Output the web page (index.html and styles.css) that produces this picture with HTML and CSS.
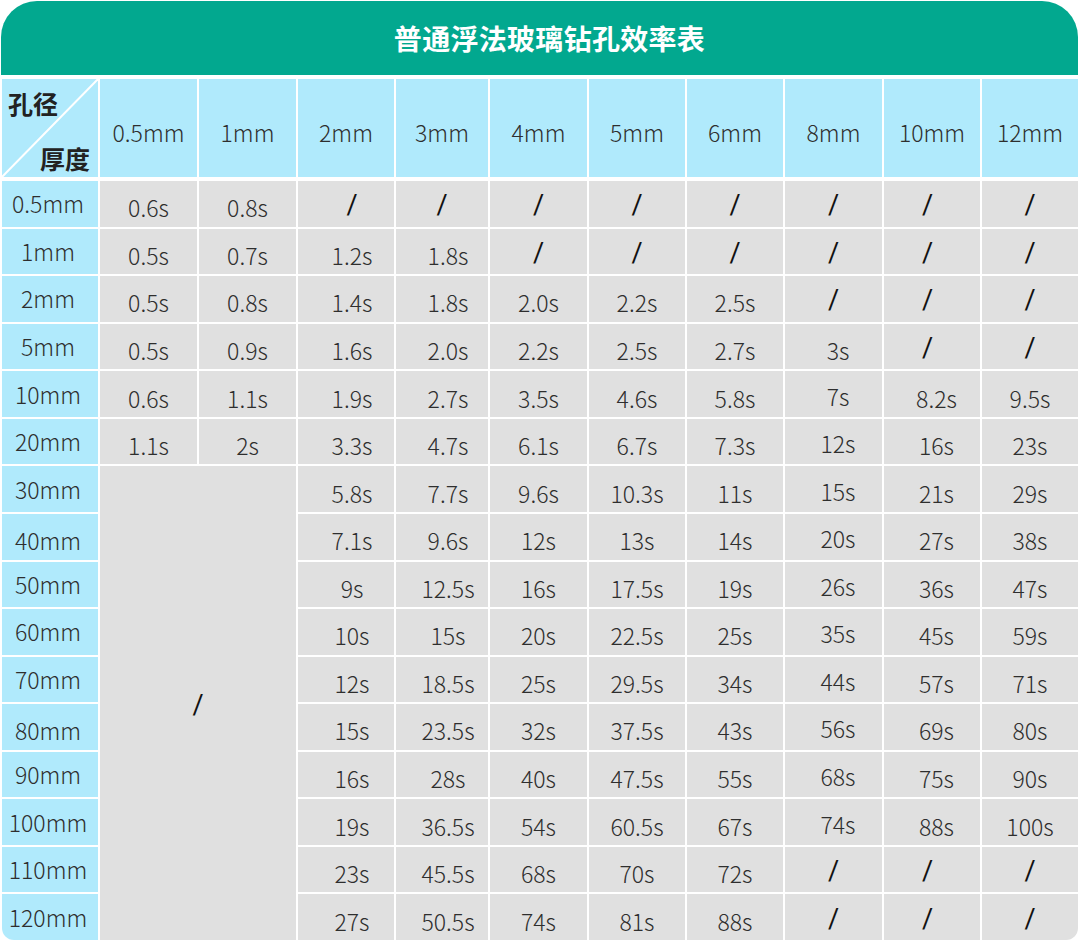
FILE: index.html
```html
<!DOCTYPE html>
<html lang="zh-CN">
<head>
<meta charset="utf-8">
<title>普通浮法玻璃钻孔效率表</title>
<link rel="stylesheet" href="styles.css">
</head>
<body>
<div class="sheet">
  <div class="title">普通浮法玻璃钻孔效率表</div>
  <div class="grid head">
    <div class="cell corner">
      <svg class="diag" width="96" height="98" viewBox="0 0 96 98"><line x1="0" y1="98" x2="96" y2="0" stroke="#ffffff" stroke-width="2"/></svg>
      <span class="lbl-top">孔径</span>
      <span class="lbl-bot">厚度</span>
    </div>
    <div class="cell hd">0.5mm</div><div class="cell hd">1mm</div><div class="cell hd">2mm</div><div class="cell hd">3mm</div><div class="cell hd">4mm</div><div class="cell hd">5mm</div><div class="cell hd">6mm</div><div class="cell hd">8mm</div><div class="cell hd">10mm</div><div class="cell hd">12mm</div>
  </div>
  <div class="grid body">
    <div class="cell v na merged">/</div>

    <div class="cell rl">0.5mm</div><div class="cell v">0.6s</div><div class="cell v">0.8s</div><div class="cell v na s6">/</div><div class="cell v na">/</div><div class="cell v na">/</div><div class="cell v na">/</div><div class="cell v na">/</div><div class="cell v na">/</div><div class="cell v na m4">/</div><div class="cell v na">/</div>
    <div class="cell rl">1mm</div><div class="cell v">0.5s</div><div class="cell v">0.7s</div><div class="cell v s6">1.2s</div><div class="cell v s6">1.8s</div><div class="cell v na">/</div><div class="cell v na">/</div><div class="cell v na">/</div><div class="cell v na">/</div><div class="cell v na m4">/</div><div class="cell v na">/</div>
    <div class="cell rl">2mm</div><div class="cell v">0.5s</div><div class="cell v">0.8s</div><div class="cell v s6">1.4s</div><div class="cell v s6">1.8s</div><div class="cell v">2.0s</div><div class="cell v">2.2s</div><div class="cell v">2.5s</div><div class="cell v na">/</div><div class="cell v na m4">/</div><div class="cell v na">/</div>
    <div class="cell rl">5mm</div><div class="cell v">0.5s</div><div class="cell v">0.9s</div><div class="cell v s6">1.6s</div><div class="cell v s6">2.0s</div><div class="cell v">2.2s</div><div class="cell v">2.5s</div><div class="cell v">2.7s</div><div class="cell v s4">3s</div><div class="cell v na m4">/</div><div class="cell v na">/</div>
    <div class="cell rl">10mm</div><div class="cell v">0.6s</div><div class="cell v">1.1s</div><div class="cell v s6">1.9s</div><div class="cell v s6">2.7s</div><div class="cell v">3.5s</div><div class="cell v">4.6s</div><div class="cell v">5.8s</div><div class="cell v s4 up">7s</div><div class="cell v s4">8.2s</div><div class="cell v">9.5s</div>
    <div class="cell rl">20mm</div><div class="cell v">1.1s</div><div class="cell v">2s</div><div class="cell v s6">3.3s</div><div class="cell v s6">4.7s</div><div class="cell v">6.1s</div><div class="cell v">6.7s</div><div class="cell v">7.3s</div><div class="cell v s4 up">12s</div><div class="cell v s4">16s</div><div class="cell v">23s</div>
    <div class="cell rl">30mm</div><div class="cell v s6">5.8s</div><div class="cell v s6">7.7s</div><div class="cell v">9.6s</div><div class="cell v">10.3s</div><div class="cell v">11s</div><div class="cell v s4 up">15s</div><div class="cell v s4">21s</div><div class="cell v">29s</div>
    <div class="cell rl lo">40mm</div><div class="cell v s6">7.1s</div><div class="cell v s6">9.6s</div><div class="cell v">12s</div><div class="cell v">13s</div><div class="cell v">14s</div><div class="cell v s4 up">20s</div><div class="cell v s4">27s</div><div class="cell v">38s</div>
    <div class="cell rl">50mm</div><div class="cell v s6">9s</div><div class="cell v s6">12.5s</div><div class="cell v">16s</div><div class="cell v">17.5s</div><div class="cell v">19s</div><div class="cell v s4 up">26s</div><div class="cell v s4">36s</div><div class="cell v">47s</div>
    <div class="cell rl">60mm</div><div class="cell v s6">10s</div><div class="cell v s6">15s</div><div class="cell v">20s</div><div class="cell v">22.5s</div><div class="cell v">25s</div><div class="cell v s4 up">35s</div><div class="cell v s4">45s</div><div class="cell v">59s</div>
    <div class="cell rl">70mm</div><div class="cell v s6">12s</div><div class="cell v s6">18.5s</div><div class="cell v">25s</div><div class="cell v">29.5s</div><div class="cell v">34s</div><div class="cell v s4 up">44s</div><div class="cell v s4">57s</div><div class="cell v">71s</div>
    <div class="cell rl lo">80mm</div><div class="cell v s6">15s</div><div class="cell v s6">23.5s</div><div class="cell v">32s</div><div class="cell v">37.5s</div><div class="cell v">43s</div><div class="cell v s4 up">56s</div><div class="cell v s4">69s</div><div class="cell v">80s</div>
    <div class="cell rl">90mm</div><div class="cell v s6">16s</div><div class="cell v s6">28s</div><div class="cell v">40s</div><div class="cell v">47.5s</div><div class="cell v">55s</div><div class="cell v s4 up">68s</div><div class="cell v s4">75s</div><div class="cell v">90s</div>
    <div class="cell rl">100mm</div><div class="cell v s6">19s</div><div class="cell v s6">36.5s</div><div class="cell v">54s</div><div class="cell v">60.5s</div><div class="cell v">67s</div><div class="cell v s4 up">74s</div><div class="cell v s4">88s</div><div class="cell v">100s</div>
    <div class="cell rl">110mm</div><div class="cell v s6">23s</div><div class="cell v s6">45.5s</div><div class="cell v">68s</div><div class="cell v">70s</div><div class="cell v">72s</div><div class="cell v na">/</div><div class="cell v na m4">/</div><div class="cell v na">/</div>
    <div class="cell rl bl">120mm</div><div class="cell v s6">27s</div><div class="cell v s6">50.5s</div><div class="cell v">74s</div><div class="cell v">81s</div><div class="cell v">88s</div><div class="cell v na">/</div><div class="cell v na m4">/</div><div class="cell v na br">/</div>
  </div>
</div>
</body>
</html>
```

FILE: styles.css
```css
html, body {
  margin: 0;
  padding: 0;
  background: #ffffff;
}
body {
  width: 1080px;
  height: 942px;
  overflow: hidden;
  font-family: "Noto Sans CJK SC", "Noto Sans", sans-serif;
  color: #2e2e2e;
}
.sheet {
  padding: 1px 2px 0 1px;
}
.title {
  height: 74px;
  margin-bottom: 4px;
  padding-left: 20px;
  background: #02a88f;
  border-radius: 36px 36px 0 0;
  color: #ffffff;
  font-size: 28px;
  font-weight: 700;
  display: flex;
  align-items: center;
  justify-content: center;
  letter-spacing: 0.3px;
}
.grid {
  display: grid;
  grid-template-columns: 96px 97px 97px 96px 92px 97px 96px 96px 97px 96px 96px;
  column-gap: 2px;
  margin-left: 1px;
}
.head {
  height: 98px;
  margin-bottom: 4px;
}
.body {
  height: 759px;
  grid-template-rows: repeat(16, 1fr);
  row-gap: 2px;
}
.cell {
  display: flex;
  align-items: center;
  justify-content: center;
  font-size: 23px;
  font-weight: 300;
  line-height: 1;
}
.hd {
  background: #b0eafc;
  padding-top: 8px;
}
.corner {
  background: #b0eafc;
  position: relative;
}
.diag {
  position: absolute;
  left: 0;
  top: 0;
}
.lbl-top, .lbl-bot {
  position: absolute;
  font-size: 25px;
  font-weight: 700;
  color: #222222;
  line-height: 1;
}
.lbl-top {
  left: 6px;
  top: 12px;
}
.lbl-bot {
  left: 38px;
  top: 67px;
}
.rl {
  background: #b0eafc;
  padding-right: 4px;
}
.rl.lo {
  padding-top: 8px;
}
.v {
  background: #e0e0e0;
  padding-top: 8px;
}
.v.up {
  padding-top: 4px;
}
.na {
  font-family: Roboto, "Liberation Sans", sans-serif;
  font-weight: 400;
  font-size: 27px;
  color: #111111;
  padding-top: 4px;
}
.s6 {
  padding-left: 12px;
}
.s4 {
  padding-left: 9px;
}
.m4 {
  padding-right: 9px;
}
.merged {
  grid-column: 2 / span 2;
  grid-row: 7 / span 10;
}
.bl {
  border-bottom-left-radius: 12px;
}
.br {
  border-bottom-right-radius: 12px;
}
```
